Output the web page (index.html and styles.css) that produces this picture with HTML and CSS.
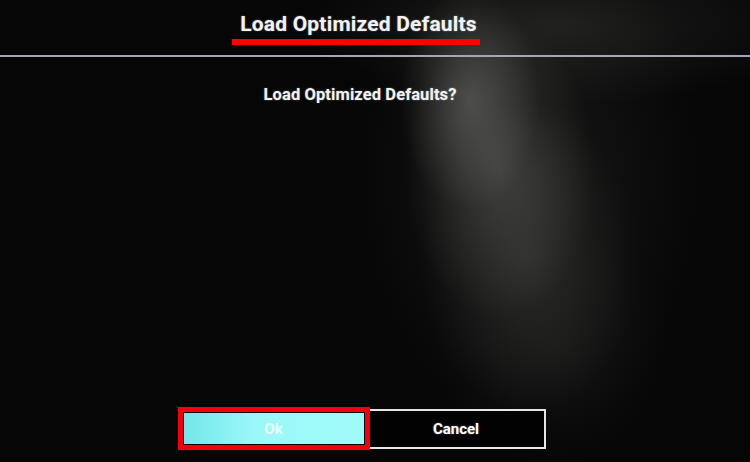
FILE: index.html
```html
<!DOCTYPE html>
<html lang="en">
<head>
    <meta charset="UTF-8">
    <meta name="viewport" content="width=device-width, initial-scale=1.0">
    <title>Load Optimized Defaults</title>
    <link rel="stylesheet" href="styles.css">
</head>
<body>

    <header class="title-bar">
        <h1 class="title"><span class="marked">Load Optimized Defaults</span></h1>
    </header>

    <main class="dialog">
        <p class="question">Load Optimized Defaults?</p>

        <div class="actions">
            <div class="btn-frame">
                <button class="btn btn-ok">Ok</button>
            </div>
            <button class="btn btn-cancel">Cancel</button>
        </div>
    </main>

</body>
</html>
```

FILE: styles.css
```css
* {
    margin: 0;
    padding: 0;
    box-sizing: border-box;
}
html, body {
    height: 100%;
}
body {
    font-family: Roboto, "Liberation Sans", sans-serif;
    color: #f2f2f4;
    overflow: hidden;
    display: flex;
    flex-direction: column;
    background-color: #060606;
    /* glare from the photo, a soft beam running down to the right */
    background-image:
        radial-gradient(ellipse 70px 110px at 470px 100px, rgba(140, 140, 136, 0.42), transparent),
        radial-gradient(ellipse 95px 150px at 500px 170px, rgba(120, 120, 116, 0.36), transparent),
        radial-gradient(ellipse 110px 150px at 530px 260px, rgba(95, 95, 92, 0.28), transparent),
        radial-gradient(ellipse 120px 120px at 555px 350px, rgba(60, 60, 58, 0.2), transparent),
        radial-gradient(ellipse 180px 260px at 530px 180px, rgba(75, 75, 72, 0.25), transparent),
        radial-gradient(ellipse 260px 80px at 560px 25px, rgba(75, 75, 72, 0.32), transparent);
}
.title-bar {
    height: 57px;
    padding-top: 12px;
    border-bottom: 2px solid #a8a6b2;
    text-align: center;
    padding-right: 38px;
}
.title {
    font-size: 21px;
    font-weight: 700;
    letter-spacing: 0.2px;
    text-shadow: 0 0 2px rgba(255, 255, 255, 0.4);
}
.marked {
    display: inline-block;
    padding: 0 3px 2px 8px;
    border-bottom: 6px solid #ff0000;
    line-height: 25px;
}
.dialog {
    flex: 1;
    display: flex;
    flex-direction: column;
    align-items: center;
}
.question {
    margin-top: 28px;
    font-size: 16.5px;
    font-weight: 700;
    letter-spacing: 0.1px;
    padding-right: 30px;
    text-shadow: 0 0 2px rgba(255, 255, 255, 0.4);
}
.actions {
    margin-top: auto;
    margin-bottom: 12px;
    display: flex;
    align-items: center;
    padding-right: 27px;
}
.btn-frame {
    border: 5px solid #f00010;
    padding: 1px;
    width: 192px;
    height: 43px;
    position: relative;
    z-index: 1;
}
.btn {
    font-family: Roboto, "Liberation Sans", sans-serif;
    font-size: 15px;
    font-weight: 700;
    border: none;
    color: #fff;
}
.btn-ok {
    width: 100%;
    height: 100%;
    background: linear-gradient(90deg, #74e6ea, #9cf8f8 40%, #a0fafa);
    color: #e8ffff;
}
.btn-cancel {
    width: 177px;
    height: 40px;
    margin-left: -1px;
    background: #020202;
    border: 2px solid #e6e6ea;
    border-left: none;
    text-shadow: 0 0 2px rgba(255, 255, 255, 0.4);
}
```
